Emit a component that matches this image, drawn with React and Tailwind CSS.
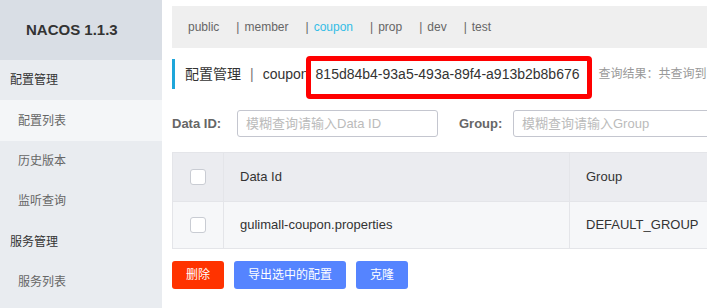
// App.jsx
const font = { fontFamily: '"Liberation Sans", "Noto Sans CJK SC", sans-serif' };

const menu = [
  { label: "配置管理", section: true },
  { label: "配置列表", active: true },
  { label: "历史版本" },
  { label: "监听查询" },
  { label: "服务管理", section: true },
  { label: "服务列表" },
];

const namespaces = ["public", "member", "coupon", "prop", "dev", "test"];

function Checkbox() {
  return <div className="w-4 h-4 bg-white border border-[#c9ccd3] rounded-[3px]" />;
}

export default function App() {
  return (
    <div className="w-[707px] h-[308px] flex bg-white overflow-hidden" style={font}>
      {/* Sidebar */}
      <aside className="w-[162px] shrink-0 bg-[#e9ecf0]">
        <div className="h-[60px] bg-[#d9dee5] flex items-center pl-[26px]">
          <span className="text-[15px] font-bold text-[#333]">NACOS 1.1.3</span>
        </div>
        {menu.map((m) => (
          <div
            key={m.label}
            className={`h-[40.4px] flex items-center text-[12px] ${
              m.section ? "pl-[10px] text-[#333]" : "pl-[18px] text-[#666]"
            } ${m.active ? "bg-[#f4f6f8]" : ""}`}
          >
            {m.label}
          </div>
        ))}
      </aside>

      {/* Main */}
      <main className="flex-1 min-w-0 pl-[10px] overflow-hidden">
        <div className="mt-[6px] h-[42px] w-[600px] bg-[#efefef] flex items-center pl-4 gap-[17px] text-[12px] text-[#666]">
          {namespaces.map((n, i) => (
            <span key={n} className="whitespace-nowrap">
              {i > 0 && <span className="mr-[5px]">|</span>}
              <span className={n === "coupon" ? "text-[#33bde6]" : ""}>{n}</span>
            </span>
          ))}
        </div>

        {/* Title */}
        <div className="mt-[11px] h-[30px] border-l-[3px] border-[#1ea6da] pl-[10px] flex items-center whitespace-nowrap">
          <span className="shrink-0 text-[14px] text-[#333]">配置管理</span>
          <span className="shrink-0 text-[14px] text-[#777] mx-[9px]">|</span>
          <span className="shrink-0 text-[14px] text-[#333]">coupon</span>
          <span className="shrink-0 relative ml-[7px] text-[14px] text-[#333]">
            <span className="absolute -left-[10px] -right-[12px] -top-[8px] -bottom-[14px] bg-white border-[5px] border-[#ff0000] rounded-[4px]" />
            <span className="relative z-10">815d84b4-93a5-493a-89f4-a913b2b8b676</span>
          </span>
          <span className="shrink-0 ml-[19px] text-[12px] text-[#999]">查询结果：共查询到 1 条满足要求的配置。</span>
        </div>

        {/* Search */}
        <div className="mt-[21px] h-[27px] flex items-center whitespace-nowrap">
          <span className="shrink-0 text-[13px] font-bold text-[#666] w-[65px]">Data ID:</span>
          <div className="shrink-0 w-[201px] h-[27px] border border-[#c4c6cf] rounded-[3px] flex items-center pl-[8px] text-[13px] text-[#bbb]">
            模糊查询请输入Data ID
          </div>
          <span className="shrink-0 ml-[21px] text-[13px] font-bold text-[#666] w-[54px]">Group:</span>
          <div className="shrink-0 w-[250px] h-[27px] border border-[#c4c6cf] rounded-[3px] flex items-center pl-[8px] text-[13px] text-[#bbb]">
            模糊查询请输入Group
          </div>
        </div>

        {/* Table */}
        <div className="mt-[15px] w-[620px] border border-[#e4e5e9] text-[13px] text-[#333]">
          <div className="h-[49px] flex bg-[#ebecf0] border-b border-[#e4e5e9]">
            <div className="w-[51px] shrink-0 flex items-center justify-center border-r border-[#e4e5e9]">
              <Checkbox />
            </div>
            <div className="w-[346px] shrink-0 flex items-center pl-[16px] border-r border-[#e4e5e9]">Data Id</div>
            <div className="flex-1 flex items-center pl-[16px]">Group</div>
          </div>
          <div className="h-[46px] flex bg-[#f6f7f9]">
            <div className="w-[51px] shrink-0 flex items-center justify-center border-r border-[#e4e5e9]">
              <Checkbox />
            </div>
            <div className="w-[346px] shrink-0 flex items-center pl-[16px] border-r border-[#e4e5e9]">
              gulimall-coupon.properties
            </div>
            <div className="flex-1 flex items-center pl-[16px]">DEFAULT_GROUP</div>
          </div>
        </div>

        {/* Actions */}
        <div className="mt-[12px] flex gap-[10px] text-[12px] text-white">
          <button className="h-[28px] px-[14px] rounded-[3px] bg-[#ff3300]">删除</button>
          <button className="h-[28px] px-[14px] rounded-[3px] bg-[#5584ff]">导出选中的配置</button>
          <button className="h-[28px] px-[14px] rounded-[3px] bg-[#5584ff]">克隆</button>
        </div>
      </main>
    </div>
  );
}
